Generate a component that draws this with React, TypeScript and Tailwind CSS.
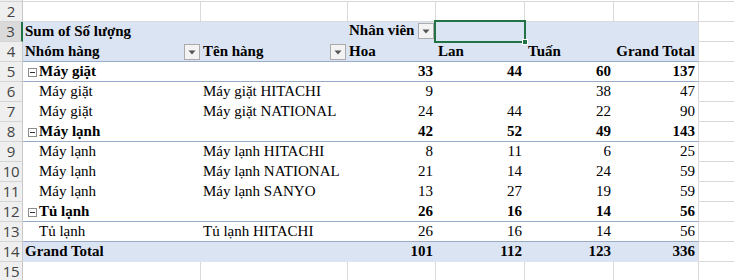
import React from "react";

const W = [178, 147, 88, 89, 89, 85];
const GRID = "#d9d9d9";
const LINE = "#9aabc7";
const BLUE = "#dbe4f3";

function Dropdown() {
  return (
    <div className="w-[16px] h-[16px] border border-[#ababab] bg-[#f3f3f3] flex items-center justify-center shrink-0">
      <svg width="8" height="5" viewBox="0 0 8 5">
        <path d="M0.5 0.5 L7.5 0.5 L4 4.5 Z" fill="#555" />
      </svg>
    </div>
  );
}

function MinusBox() {
  return (
    <div className="w-[9px] h-[9px] border border-[#8c8c8c] bg-white flex items-center justify-center mr-[2px] mb-[4px] shrink-0">
      <div className="w-[5px] h-[1px] bg-[#333]" />
    </div>
  );
}

type Cell = {
  text?: React.ReactNode;
  right?: boolean;
  bold?: boolean;
  pl?: string;
};

function RowHeader({ n, selected }: { n: number; selected?: boolean }) {
  return (
    <div
      className={
        "w-[23px] h-[20px] shrink-0 border-b border-b-[#d4d4d4] flex items-end justify-center text-[15px] leading-[19px] text-[#444] " +
        (selected
          ? "bg-[#dadada] border-r-2 border-r-[#217346]"
          : "bg-[#efefef] border-r border-r-[#c8c8c8]")
      }
      style={{ fontFamily: '"Open Sans", "Liberation Sans", Arial, sans-serif', letterSpacing: "-0.3px" }}
    >
      <span>{n}</span>
    </div>
  );
}

function PlainRow({ n }: { n: number }) {
  return (
    <div className="flex">
      <RowHeader n={n} />
      {W.map((w, i) => (
        <div
          key={i}
          className="h-[20px] shrink-0 border-r border-b bg-white"
          style={{ width: w, borderColor: GRID }}
        />
      ))}
      <div className="h-[20px] flex-1 border-b bg-white" style={{ borderColor: GRID }} />
    </div>
  );
}

function PivotRow({
  n,
  cells,
  blue,
  lineBelow,
  selected,
}: {
  n: number;
  cells: Cell[];
  blue?: boolean;
  lineBelow?: boolean;
  selected?: boolean;
}) {
  return (
    <div className="flex">
      <RowHeader n={n} selected={selected} />
      {W.map((w, i) => {
        const c = cells[i] || {};
        return (
          <div
            key={i}
            className={
              "h-[20px] shrink-0 border-b flex items-end leading-[19px] text-[15px] text-black whitespace-nowrap overflow-hidden " +
              (i === 5 ? "border-r " : "") +
              (c.right ? "justify-end pr-[3px] " : "") +
              (c.bold ? "font-bold " : "")
            }
            style={{
              width: w,
              backgroundColor: blue ? BLUE : "#ffffff",
              borderBottomColor: lineBelow ? LINE : "transparent",
              borderRightColor: GRID,
              paddingLeft: c.pl ?? (c.right ? undefined : "2px"),
            }}
          >
            {c.text}
          </div>
        );
      })}
      <div className="h-[20px] flex-1 border-b bg-white" style={{ borderColor: GRID }} />
    </div>
  );
}

export default function App() {
  const group = (label: string) => (
    <span className="flex items-end">
      <MinusBox />
      <span>{label}</span>
    </span>
  );
  const num = (t: string, bold?: boolean): Cell => ({ text: t, right: true, bold });
  const detail = (a: string, b: string, c: string, d: string, e: string, f: string): Cell[] => [
    { text: a, pl: "16px" },
    { text: b, pl: "2px" },
    num(c),
    num(d),
    num(e),
    num(f),
  ];
  const groupRow = (a: string, c: string, d: string, e: string, f: string): Cell[] => [
    { text: group(a), bold: true, pl: "5px" },
    {},
    num(c, true),
    num(d, true),
    num(e, true),
    num(f, true),
  ];

  return (
    <div
      className="w-[734px] h-[280px] overflow-hidden bg-white relative"
      style={{ fontFamily: '"Liberation Serif", "Times New Roman", serif' }}
    >
      <div className="flex h-[2px]">
        <div className="w-[23px] h-[2px] bg-[#efefef] border-r border-r-[#c8c8c8] border-b border-b-[#d4d4d4]" />
        <div className="flex-1 h-[2px] border-b" style={{ borderColor: GRID }} />
      </div>
      <PlainRow n={2} />
      <PivotRow
        n={3}
        selected
        blue
        cells={[
          { text: "Sum of Số lượng", bold: true },
          {},
          {
            text: (
              <span className="flex items-end justify-between w-full pr-[2px] pb-[2px]">
                <span className="leading-[17px]">Nhân viên</span>
                <Dropdown />
              </span>
            ),
            bold: true,
            pl: "1px",
          },
          {},
          {},
          {},
        ]}
      />
      <PivotRow
        n={4}
        blue
        lineBelow
        cells={[
          {
            text: (
              <span className="flex items-end justify-between w-full pr-[1px] pb-[1px]">
                <span className="leading-[18px]">Nhóm hàng</span>
                <Dropdown />
              </span>
            ),
            bold: true,
          },
          {
            text: (
              <span className="flex items-end justify-between w-full pr-[2px] pb-[1px]">
                <span className="leading-[18px]">Tên hàng</span>
                <Dropdown />
              </span>
            ),
            bold: true,
          },
          { text: "Hoa", bold: true, pl: "1px" },
          { text: "Lan", bold: true, pl: "2px" },
          { text: "Tuấn", bold: true, pl: "3px" },
          { text: "Grand Total", bold: true, right: true },
        ]}
      />
      <PivotRow n={5} lineBelow cells={groupRow("Máy giặt", "33", "44", "60", "137")} />
      <PivotRow n={6} cells={detail("Máy giặt", "Máy giặt HITACHI", "9", "", "38", "47")} />
      <PivotRow n={7} cells={detail("Máy giặt", "Máy giặt NATIONAL", "24", "44", "22", "90")} />
      <PivotRow n={8} lineBelow cells={groupRow("Máy lạnh", "42", "52", "49", "143")} />
      <PivotRow n={9} cells={detail("Máy lạnh", "Máy lạnh HITACHI", "8", "11", "6", "25")} />
      <PivotRow n={10} cells={detail("Máy lạnh", "Máy lạnh NATIONAL", "21", "14", "24", "59")} />
      <PivotRow n={11} cells={detail("Máy lạnh", "Máy lạnh SANYO", "13", "27", "19", "59")} />
      <PivotRow n={12} lineBelow cells={groupRow("Tủ lạnh", "26", "16", "14", "56")} />
      <PivotRow n={13} lineBelow cells={detail("Tủ lạnh", "Tủ lạnh HITACHI", "26", "16", "14", "56")} />
      <PivotRow
        n={14}
        blue
        cells={[
          { text: "Grand Total", bold: true },
          {},
          num("101", true),
          num("112", true),
          num("123", true),
          num("336", true),
        ]}
      />
      <PlainRow n={15} />

      {/* selection overlay on D3 */}
      <div className="absolute left-[434px] top-[20px] w-[92px] h-[23px] border-2 border-[#217346] pointer-events-none" />
      <div className="absolute left-[522px] top-[39px] w-[6px] h-[6px] bg-[#217346] border border-white pointer-events-none" />
    </div>
  );
}
